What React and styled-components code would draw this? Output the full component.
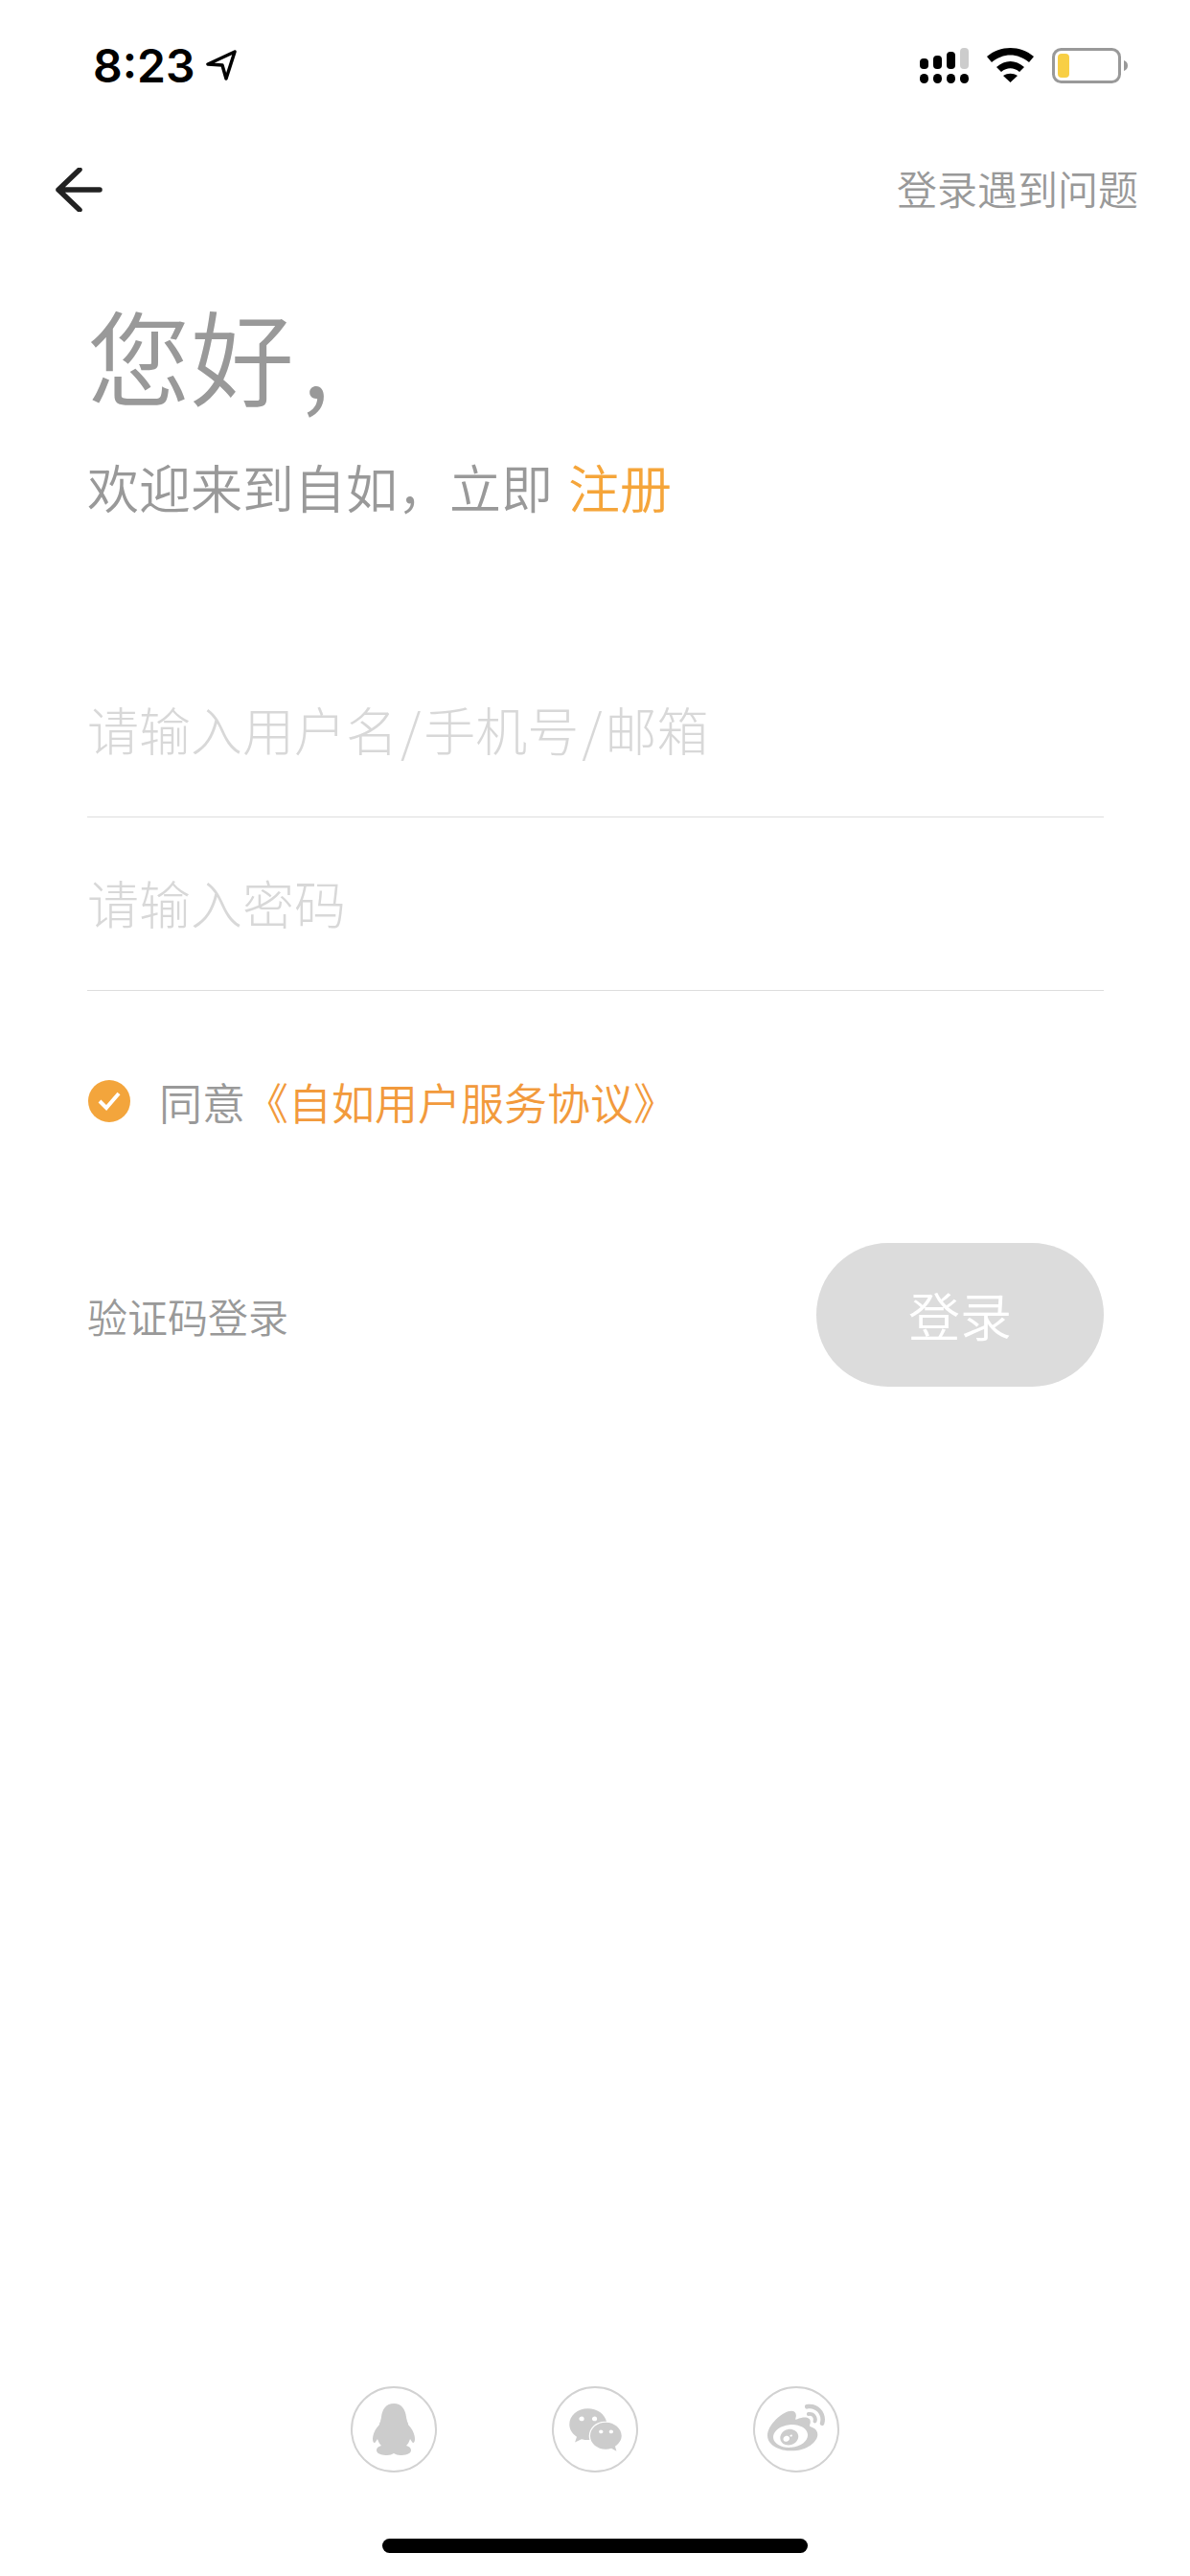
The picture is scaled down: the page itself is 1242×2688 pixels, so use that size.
import React from "react";
import styled, { createGlobalStyle } from "styled-components";
import { FaWeixin, FaWeibo } from "react-icons/fa";

const GlobalStyle = createGlobalStyle`
	html, body {
		margin: 0;
		padding: 0;
		background: #fff;
	}
	* {
		box-sizing: border-box;
	}
`;

const Page = styled.div`
	width: 1242px;
	height: 2688px;
	display: flex;
	flex-direction: column;
	background: #fff;
	font-family: "Noto Sans CJK SC", "Noto Sans", sans-serif;
	overflow: hidden;
`;

const StatusBar = styled.div`
	height: 136px;
	padding: 0 65px 0 97px;
	display: flex;
	align-items: center;
	justify-content: space-between;
`;

const Time = styled.div`
	display: flex;
	align-items: center;
	gap: 12px;
	font-family: Inter, "Liberation Sans", sans-serif;
	font-size: 48px;
	font-weight: 600;
	color: #000;
`;

const StatusIcons = styled.div`
	display: flex;
	align-items: center;
	gap: 19px;
`;

const NavBar = styled.div`
	height: 124px;
	padding: 0 54px 0 58px;
	display: flex;
	align-items: center;
	justify-content: space-between;
`;

const HelpLink = styled.span`
	padding-bottom: 5px;
	font-size: 42px;
	font-weight: 350;
	color: #999;
`;

const Content = styled.div`
	padding: 0 90px 0 91px;
`;

const Title = styled.h1`
	margin: 44px 0 0;
	height: 130px;
	line-height: 130px;
	font-size: 108px;
	font-weight: 350;
	color: #999;
`;

const Comma = styled.span`
	margin-left: 8px;
`;

const Welcome = styled.p`
	margin: 34px 0 124px;
	height: 80px;
	line-height: 80px;
	font-size: 54px;
	font-weight: 350;
	color: #999;
`;

const Orange = styled.span`
	margin-left: ${({ gap }) => gap || 0}px;
	color: ${({ deep }) => (deep ? "#f29a3c" : "#f5a53a")};
`;

const Field = styled.div`
	height: 181px;
	padding-bottom: 4px;
	display: flex;
	align-items: center;
	border-bottom: 1px solid #ddd;
	font-size: 54px;
	font-weight: 300;
	color: #d8d8d8;
`;

const Slash = styled.span`
	margin: 0 3px;
`;

const AgreeRow = styled.div`
	margin-top: 78px;
	padding-left: 1px;
	height: 74px;
	display: flex;
	align-items: center;
	gap: 30px;
	font-size: 45px;
	font-weight: 350;
	color: #999;
`;

const CheckDot = styled.span`
	width: 44px;
	height: 44px;
	display: flex;
	align-items: center;
	justify-content: center;
	border-radius: 50%;
	background: #f3a53c;
`;

const ActionRow = styled.div`
	margin-top: 111px;
	display: flex;
	align-items: center;
	justify-content: space-between;
`;

const CodeLogin = styled.span`
	font-size: 42px;
	font-weight: 350;
	color: #999;
`;

const LoginButton = styled.div`
	width: 300px;
	height: 150px;
	padding-bottom: 2px;
	display: flex;
	align-items: center;
	justify-content: center;
	border-radius: 75px;
	background: #dcdcdc;
	font-size: 54px;
	font-weight: 350;
	color: #fff;
`;

const Footer = styled.div`
	margin-top: auto;
	display: flex;
	flex-direction: column;
	align-items: center;
	padding-bottom: 24px;
`;

const SocialRow = styled.div`
	display: flex;
	gap: 120px;
`;

const SocialButton = styled.div`
	width: 90px;
	height: 90px;
	display: flex;
	align-items: center;
	justify-content: center;
	border: 2px solid #d2d2d2;
	border-radius: 50%;
	color: #ccc;
	font-size: ${({ size }) => size}px;
`;

const HomeBar = styled.div`
	margin-top: 69px;
	width: 444px;
	height: 15px;
	border-radius: 8px;
	background: #000;
`;

function SignalIcon() {
	return (
		<svg width="51" height="37" viewBox="0 0 51 37">
			<rect x="0" y="11" width="9" height="11" rx="4" fill="#000" />
			<rect x="14" y="8" width="9" height="14" rx="4" fill="#000" />
			<rect x="28" y="4" width="9" height="18" rx="4" fill="#000" />
			<rect x="42" y="0" width="9" height="22" rx="4" fill="#ccc" />
			<rect x="0" y="27" width="9" height="10" rx="4.5" fill="#000" />
			<rect x="14" y="27" width="9" height="10" rx="4.5" fill="#000" />
			<rect x="28" y="27" width="9" height="10" rx="4.5" fill="#000" />
			<rect x="42" y="27" width="9" height="10" rx="4.5" fill="#000" />
		</svg>
	);
}

function WifiIcon() {
	return (
		<svg width="49" height="36" viewBox="0 0 49 36">
			<path d="M0 9 C14 -3 35 -3 49 9 L44 15 C32 5 17 5 5 15 Z" fill="#000" />
			<path d="M10 20 C19 12 30 12 39 20 L34 25 C28 20 21 20 15 25 Z" fill="#000" />
			<path d="M24.5 36 L17 29 C22 26 27 26 32 29 Z" fill="#000" />
		</svg>
	);
}

function BatteryIcon() {
	return (
		<svg width="79" height="37" viewBox="0 0 79 37">
			<rect x="1.5" y="1.5" width="69" height="34" rx="8" fill="none" stroke="#999" strokeWidth="3" />
			<rect x="6" y="6" width="12" height="25" rx="4" fill="#f8cf45" />
			<path d="M75 13 C78 14 79 16 79 18.5 C79 21 78 23 75 24 Z" fill="#999" />
		</svg>
	);
}

function PenguinIcon() {
	return (
		<svg width="50" height="55" viewBox="0 0 50 55">
			<path
				d="M25 0 C33 0 37 6 38 14 C38 16 39 17 39 19 C40 20 40 21 40 22 C44 26 47 32 47 37 C47 41 45 42 44 40 L42 37 C41 40 40 42 38 44 C42 45 43 47 43 49 C43 53 36 54 32 54 C29 54 27 53 25 52 C23 53 21 54 18 54 C14 54 7 53 7 49 C7 47 8 45 12 44 C10 42 9 40 8 37 L6 40 C5 42 3 41 3 37 C3 32 6 26 10 22 C10 21 10 20 11 19 C11 17 12 16 12 14 C13 6 17 0 25 0 Z"
				fill="#ccc"
			/>
		</svg>
	);
}

export default function App() {
	return (
		<Page>
			<GlobalStyle />
			<StatusBar>
				<Time>
					8:23
					<svg width="32" height="32" viewBox="0 0 32 32">
						<path d="M30 2 L2 15 L17 16 L21 30 Z" fill="none" stroke="#000" strokeWidth="3.5" strokeLinejoin="round" />
					</svg>
				</Time>
				<StatusIcons>
					<SignalIcon />
					<WifiIcon />
					<BatteryIcon />
				</StatusIcons>
			</StatusBar>
			<NavBar>
				<svg width="50" height="46" viewBox="0 0 50 46">
					<path d="M25 2 L3 23 L25 44 M3 23 L46 23" fill="none" stroke="#222" strokeWidth="5.5" strokeLinecap="round" strokeLinejoin="round" />
				</svg>
				<HelpLink>登录遇到问题</HelpLink>
			</NavBar>
			<Content>
				<Title>您好<Comma>,</Comma></Title>
				<Welcome>
					欢迎来到自如，立即 <Orange gap={4}>注册</Orange>
				</Welcome>
				<Field>请输入用户名<Slash>/</Slash>手机号<Slash>/</Slash>邮箱</Field>
				<Field>请输入密码</Field>
				<AgreeRow>
					<CheckDot>
						<svg width="28" height="24" viewBox="0 0 28 24">
							<path d="M4 12 L11 19 L24 4" fill="none" stroke="#fff" strokeWidth="4" />
						</svg>
					</CheckDot>
					<span>
						同意<Orange deep>《自如用户服务协议》</Orange>
					</span>
				</AgreeRow>
				<ActionRow>
					<CodeLogin>验证码登录</CodeLogin>
					<LoginButton>登录</LoginButton>
				</ActionRow>
			</Content>
			<Footer>
				<SocialRow>
					<SocialButton><PenguinIcon /></SocialButton>
					<SocialButton size={57}><FaWeixin /></SocialButton>
					<SocialButton size={60}><FaWeibo /></SocialButton>
				</SocialRow>
				<HomeBar />
			</Footer>
		</Page>
	);
}
